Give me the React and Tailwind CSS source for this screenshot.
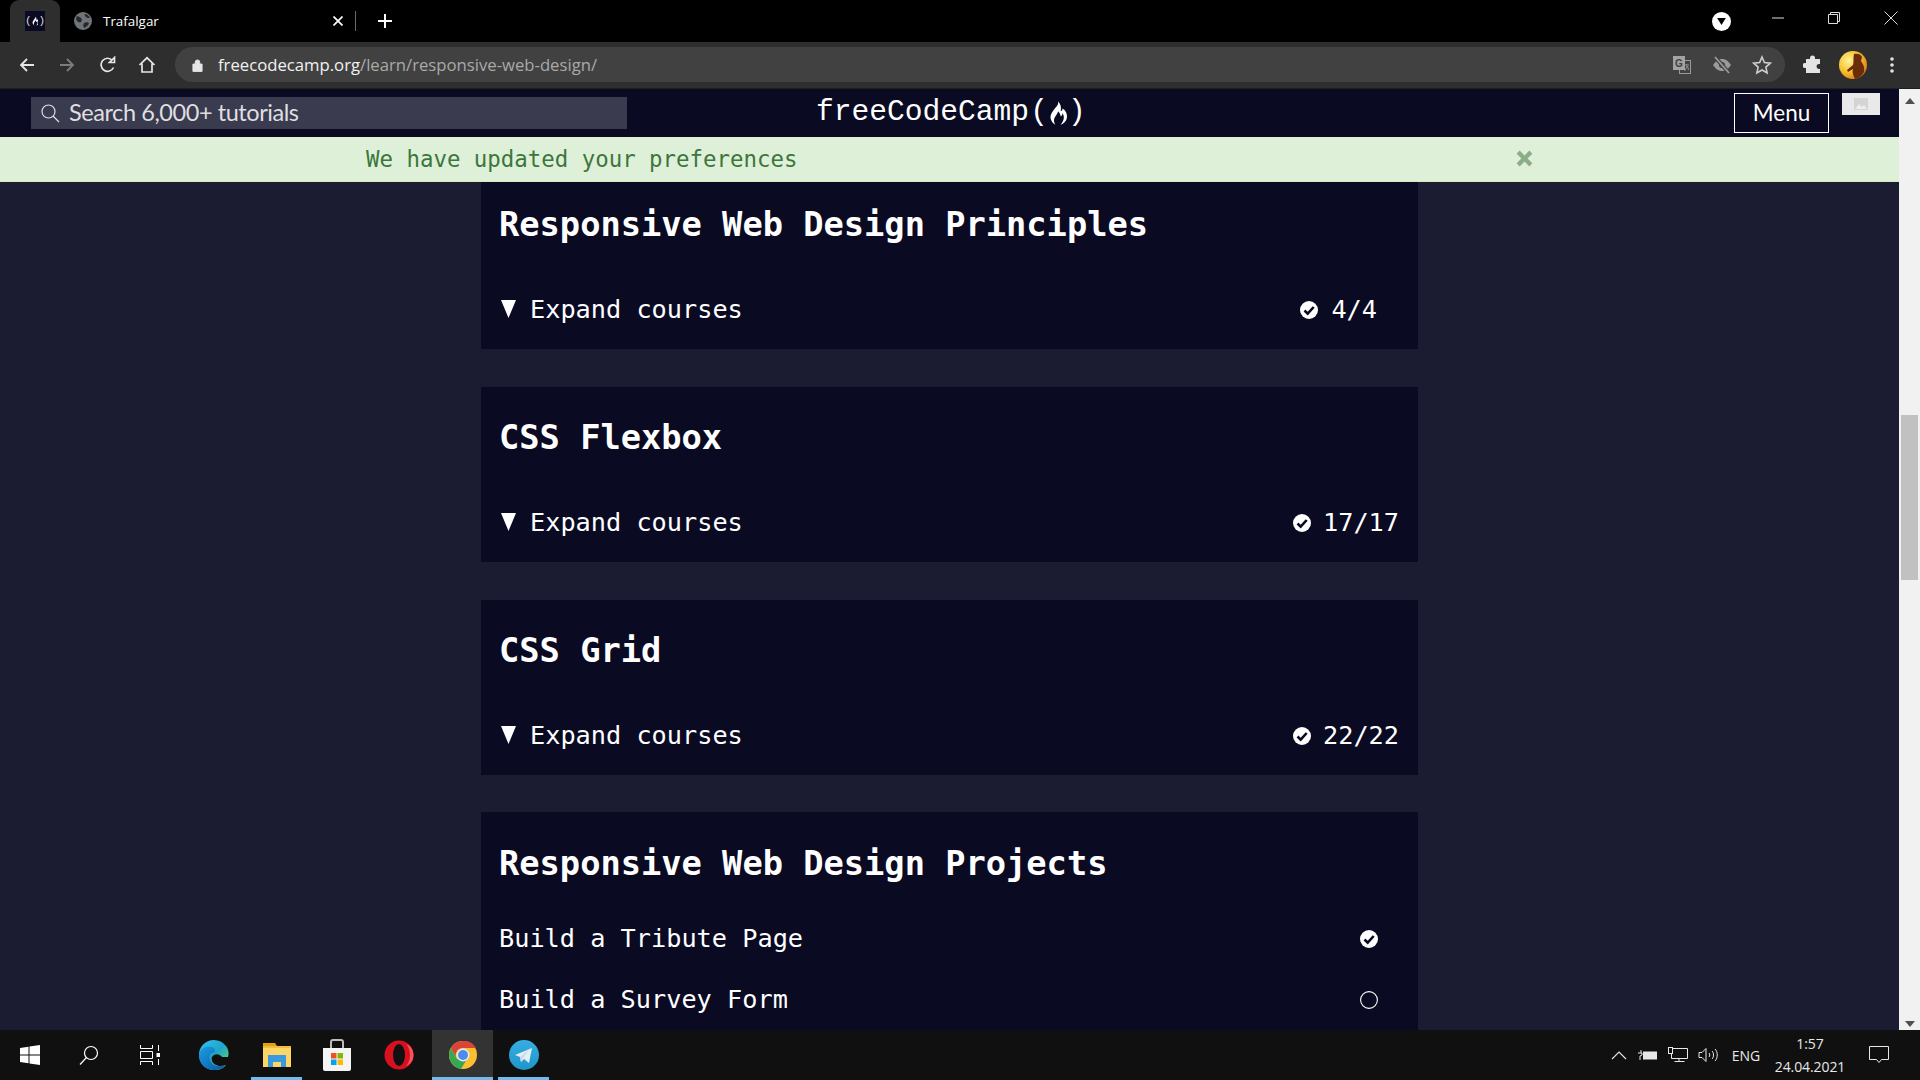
import React from "react";

const mono = "font-['DejaVu_Sans_Mono','Liberation_Mono',monospace]";

const Flame = ({ className = "", color = "#fff" }) => (
  <svg viewBox="0 0 20 26" className={className}>
    <path fill={color} d="M10 0C11 4 8 6 5 10 2 14 1 17 2 20 3 23 5 25 7 26 5 23 5 20 7 17 8 15 10 13 10 11 12 13 13 15 13 17 14 16 15 15 15 13 17 16 17 20 15 23L13 26C17 25 20 21 20 17 20 12 17 9 15 8 15 10 14 11 13 11 14 7 13 3 10 0z" />
  </svg>
);

const Check = ({ size = 18 }) => (
  <svg viewBox="0 0 18 18" width={size} height={size} className="shrink-0">
    <circle cx="9" cy="9" r="9" fill="#fff" />
    <path d="M4.500 9.500 7.700 12.700 13.700 6" fill="none" stroke="#0a0a23" strokeWidth="2.600" />
  </svg>
);

const Circle = () => (
  <svg viewBox="0 0 18 18" width="18" height="18" className="shrink-0">
    <circle cx="9" cy="9" r="8.400" fill="none" stroke="#fff" strokeWidth="1.100" />
  </svg>
);

const Triangle = () => (
  <svg viewBox="0 0 15 18" width="15" height="18" className="shrink-0 -mt-[3px] ml-[2px]">
    <path d="M0 0h15L7.500 18z" fill="#fff" />
  </svg>
);

function Tabs() {
  return (
    <div className="h-[42px] bg-black flex items-center shrink-0 text-white">
      <div className="ml-[10px] w-[50px] h-[42px] mt-0 bg-[#2e2e2e] rounded-t-[9px] flex items-center justify-center">
        <div className="w-[20px] h-[20px] bg-[#0a0a23] flex items-center justify-center text-[#ddd] text-[11px] font-['Liberation_Mono',monospace] leading-none">
          (<Flame className="w-[7px] h-[10px]" />)
        </div>
      </div>
      <svg viewBox="0 0 18 18" width="18" height="18" className="ml-[14px]">
        <circle cx="9" cy="9" r="9" fill="#6f7478" />
        <path d="M3 4c2 1 3 1 4 2s1 3 0 4-3 0-4-1-1-3 0-5zM11 2c2 0 4 2 5 4-2 0-3 0-4-1s-2-2-1-3zM10 11c2-1 4-1 5 0-1 3-3 4-5 5-1-2-1-3 0-5z" fill="#26282a" />
      </svg>
      <span className="ml-[11px] w-[230px] text-[13.400px] font-['Open_Sans',sans-serif]">Trafalgar</span>
      <svg viewBox="0 0 10 10" width="10" height="10"><path d="M0.500 0.500l9 9M9.500 0.500l-9 9" stroke="#fff" strokeWidth="1.700" /></svg>
      <div className="ml-[12px] w-px h-[20px] bg-[#6a6a6a]" />
      <svg viewBox="0 0 16 16" width="16" height="16" className="ml-[21px]"><path d="M8 1v14M1 8h14" stroke="#fff" strokeWidth="2" /></svg>
      <div className="flex-1" />
      <div className="w-[19px] h-[19px] rounded-full bg-white flex items-center justify-center mr-[40px]">
        <svg viewBox="0 0 10 8" width="9" height="7"><path d="M0 0h10L5 8z" fill="#000" /></svg>
      </div>
      <svg viewBox="0 0 14 14" width="14" height="14" className="mr-[42px] -mt-[6px]"><path d="M1 7h12" stroke="#ddd" strokeWidth="1" /></svg>
      <svg viewBox="0 0 14 14" width="14" height="14" className="mr-[43px] -mt-[6px]"><path d="M1.500 3.500h9v9h-9zM3.500 3.500v-2h9v9h-2" fill="none" stroke="#ddd" strokeWidth="1" /></svg>
      <svg viewBox="0 0 14 14" width="14" height="14" className="mr-[22px] -mt-[6px]"><path d="M0.500 0.500l13 13M13.500 0.500l-13 13" stroke="#ddd" strokeWidth="1" /></svg>
    </div>
  );
}

function Toolbar() {
  return (
    <div className="h-[47px] bg-[#2e2e2e] flex items-center shrink-0 border-b border-[#1f1f1f] pb-[1px] text-white">
      <svg viewBox="0 0 18 18" width="18" height="18" className="ml-[18px]"><path d="M16 9H3M9 3 3 9l6 6" fill="none" stroke="#e6e6e6" strokeWidth="1.800" /></svg>
      <svg viewBox="0 0 18 18" width="18" height="18" className="ml-[22px]"><path d="M2 9h13M9 3l6 6-6 6" fill="none" stroke="#7c7c7c" strokeWidth="1.800" /></svg>
      <svg viewBox="0 0 18 18" width="18" height="18" className="ml-[23px]"><path d="M14.500 11.500A6.500 6.500 0 1 1 13.500 4.500M15.500 1.500v5h-5z" fill="none" stroke="#e6e6e6" strokeWidth="1.700" /></svg>
      <svg viewBox="0 0 18 18" width="18" height="18" className="ml-[21px]"><path d="M1.500 9 9 1.800 16.500 9M4 7.500v8.500h10V7.500" fill="none" stroke="#e6e6e6" strokeWidth="1.700" /></svg>
      <div className="ml-[19px] w-[1610px] h-[35px] rounded-full bg-[#414141] flex items-center">
        <svg viewBox="0 0 12 14" width="11" height="14" className="ml-[17px]"><path d="M1 6h10v8H1zM3.500 6V4a2.500 2.500 0 0 1 5 0v2" fill="#e6e6e6" stroke="#e6e6e6" strokeWidth="1" /></svg>
        <span className="ml-[15px] text-[16.700px] font-['Open_Sans',sans-serif] whitespace-nowrap text-[#f1f1f1]">freecodecamp.org<span className="text-[#a9a9a9]">/learn/responsive-web-design/</span></span>
        <div className="flex-1" />
        <svg viewBox="0 0 18 18" width="18" height="18">
          <rect x="6.500" y="4.500" width="11" height="13" fill="#414141" stroke="#9a9a9a" />
          <rect x="0" y="0" width="12" height="14" fill="#a3a3a3" />
          <text x="2" y="11" fontSize="10" fontWeight="700" fill="#414141" fontFamily="Liberation Sans, sans-serif">G</text>
          <path d="M11 9h5M13.500 8v1.500M11.500 15l3-5 1 4" fill="none" stroke="#9a9a9a" strokeWidth="0.900" />
        </svg>
        <svg viewBox="0 0 20 18" width="20" height="18" className="ml-[21px]"><path d="M1 9c3-4.500 6-6 9-6s6 1.500 9 6c-3 4.500-6 6-9 6s-6-1.500-9-6z" fill="#9a9a9a" /><circle cx="10" cy="9" r="3" fill="#414141" /><path d="M3 1l14 16" stroke="#414141" strokeWidth="4" /><path d="M3 1l14 16" stroke="#9a9a9a" strokeWidth="1.800" /></svg>
        <svg viewBox="0 0 20 20" width="20" height="20" className="ml-[20px] mr-[13px]"><path d="M10 2l2.400 5.500 5.900.6-4.400 4 1.200 5.900L10 15l-5.100 3 1.200-5.900-4.400-4 5.900-.6z" fill="none" stroke="#cfcfcf" strokeWidth="1.600" /></svg>
      </div>
      <svg viewBox="0 0 20 20" width="20" height="20" className="ml-[18px]"><path d="M7 3a2.500 2.500 0 0 1 5 0v1h5v5h-1a2.500 2.500 0 0 0 0 5h1v4H3v-5H2a2.500 2.500 0 0 1 0-5h1V4h4z" fill="#e4e4e4" /></svg>
      <svg viewBox="0 0 28 28" width="28" height="28" className="ml-[16px]">
        <defs><radialGradient id="av" cx="0.350" cy="0.350" r="0.800"><stop offset="0" stopColor="#fff29a" /><stop offset="0.500" stopColor="#f6c22e" /><stop offset="1" stopColor="#d9690e" /></radialGradient></defs>
        <circle cx="14" cy="14" r="14" fill="url(#av)" />
        <path d="M15 3c3-1 7 0 8 3l-1 4c2 3 4 6 3 11-2 4-6 7-9 7-2-4-3-7-2-10l-5 3-1-2 6-5c1-3 0-7 1-11z" fill="#6b2c08" />
      </svg>
      <svg viewBox="0 0 4 16" width="4" height="16" className="ml-[23px]"><circle cx="2" cy="2" r="1.800" fill="#e4e4e4" /><circle cx="2" cy="8" r="1.800" fill="#e4e4e4" /><circle cx="2" cy="14" r="1.800" fill="#e4e4e4" /></svg>
    </div>
  );
}

function Header() {
  return (
    <div className="h-[48px] bg-[#0a0a23] flex items-start shrink-0 text-white">
      <div className="ml-[31px] mt-[8px] w-[596px] h-[32px] bg-[#3b3b4f] flex items-center text-[#dfdfe2] font-['Lato',sans-serif]">
        <svg viewBox="0 0 20 20" width="20" height="20" className="ml-[9px]"><circle cx="8.500" cy="8.500" r="6.500" fill="none" stroke="#dfdfe2" strokeWidth="1.200" /><path d="M13 13l6 6" stroke="#dfdfe2" strokeWidth="1.200" /></svg>
        <span className="ml-[9px] text-[23.500px] leading-none tracking-[-0.43px] whitespace-nowrap">Search 6,000+ tutorials</span>
      </div>
      <div className="ml-[189px] mt-[6px] h-[36px] flex items-center text-[29.600px] leading-none whitespace-nowrap font-['Liberation_Mono',monospace]">
        freeCodeCamp<span className="ml-[1px]">(</span><Flame className="w-[18px] h-[24px] mx-[1px]" /><span>)</span>
      </div>
      <div className="flex-1" />
      <div className="mt-[4px] w-[95px] h-[40px] border border-white flex items-center justify-center text-[22.500px] font-['Lato',sans-serif] leading-none">Menu</div>
      <div className="ml-[13px] mt-[4px] w-[38px] h-[22px] bg-[#e9e9e9] flex items-center justify-center mr-[19px]">
        <svg viewBox="0 0 14 12" width="14" height="12"><rect width="14" height="12" fill="#d4d4d4" /><path d="M1 11l4-5 3 3 2-2 3 4z" fill="#eee" /></svg>
      </div>
    </div>
  );
}

function Banner() {
  return (
    <div className="h-[45px] bg-[#dff0d8] border-b border-[#d6e9c6] flex items-center shrink-0 pl-[366px]">
      <span className={`text-[22.400px] leading-none text-[#3c763d] whitespace-nowrap ${mono}`}>We have updated your preferences</span>
      <svg viewBox="0 0 16 16" width="17" height="17" className="ml-[719px] -mt-[1px]"><path d="M2 2l12 12M14 2 2 14" stroke="#8cae87" strokeWidth="4" /></svg>
    </div>
  );
}

function Card({ title, done, total, narrow }) {
  return (
    <div className={`w-[937px] h-[175px] shrink-0 bg-[#0a0a23] text-white pl-[18px] pr-[19px] pt-[31px] ${mono}`}>
      <h2 className="text-[33.700px] leading-[40px] font-bold whitespace-nowrap">{title}</h2>
      <div className="mt-[50px] h-[30px] flex items-center text-[25.250px] leading-none">
        <Triangle />
        <span className="ml-[14px]">Expand courses</span>
        <div className="flex-1" />
        <Check />
        <span className={narrow ? "ml-[13px] mr-[22px]" : "ml-[12px]"}>{done}/{total}</span>
      </div>
    </div>
  );
}

function Main() {
  return (
    <div className="flex-1 overflow-hidden bg-[#1b1b32] pl-[481px] flex flex-col gap-[38px]">
      <div className="-mt-[8px]">
        <Card title="Responsive Web Design Principles" done={4} total={4} narrow />
      </div>
      <Card title="CSS Flexbox" done={17} total={17} />
      <Card title="CSS Grid" done={22} total={22} />
      <div className={`-mt-[1px] w-[937px] h-[300px] shrink-0 bg-[#0a0a23] text-white pl-[18px] pr-[40px] pt-[32px] ${mono}`}>
        <h2 className="text-[33.700px] leading-[40px] font-bold whitespace-nowrap">Responsive Web Design Projects</h2>
        <div className="mt-[40px] h-[30px] flex items-center justify-between text-[25.250px] leading-none">
          <span>Build a Tribute Page</span><Check />
        </div>
        <div className="mt-[31px] h-[30px] flex items-center justify-between text-[25.250px] leading-none">
          <span>Build a Survey Form</span><Circle />
        </div>
      </div>
    </div>
  );
}

function Scrollbar() {
  return (
    <div className="w-[21px] bg-[#f1f1f1] shrink-0 flex flex-col items-center">
      <svg viewBox="0 0 10 6" width="10" height="6" className="mt-[9px]"><path d="M5 0l5 6H0z" fill="#505050" /></svg>
      <div className="mt-[311px] w-[17px] h-[165px] bg-[#c1c1c1]" />
      <div className="flex-1" />
      <svg viewBox="0 0 10 6" width="10" height="6" className="mb-[3px]"><path d="M0 0h10L5 6z" fill="#505050" /></svg>
    </div>
  );
}

const Edge = () => (
  <svg viewBox="0 0 32 32" width="32" height="32">
    <defs>
      <linearGradient id="e1" x1="0" y1="0" x2="1" y2="1"><stop offset="0" stopColor="#35c1f1" /><stop offset="0.500" stopColor="#1ea5c9" /><stop offset="1" stopColor="#7be05b" /></linearGradient>
      <linearGradient id="e2" x1="0" y1="0" x2="1" y2="1"><stop offset="0" stopColor="#1b9de2" /><stop offset="1" stopColor="#0c59a4" /></linearGradient>
    </defs>
    <path d="M16 1C7 1 1 8 1 16c0 9 7 15 15 15 5 0 9-1 12-5-5 2-12 1-14-4-1-3 0-5 2-6 3-2 7 0 8 2h6c1-3 1-7-2-11C25 3 21 1 16 1z" fill="url(#e1)" />
    <path d="M1 16C2 9 9 6 14 8c3 1 3 3 3 5-5 1-7 5-4 10 2 4 8 5 15 3-3 4-7 5-12 5C7 31 1 24 1 16z" fill="url(#e2)" />
  </svg>
);

const Files = () => (
  <svg viewBox="0 0 30 28" width="30" height="28">
    <path d="M1 2h12l2 3H1z" fill="#e0a30a" />
    <path d="M1 5h28v21H1z" fill="#fcd667" />
    <path d="M1 5h28v2H1z" fill="#f0bd3c" />
    <path d="M6 14h18v12h-5v-5h-8v5H6z" fill="#3a9ae0" />
    <path d="M11 21h8v1h-8z" fill="#fcd667" />
  </svg>
);

const Store = () => (
  <svg viewBox="0 0 30 32" width="30" height="32">
    <path d="M9 9V3a2 2 0 0 1 2-2h8a2 2 0 0 1 2 2v6" fill="none" stroke="#bdbdbd" strokeWidth="2" />
    <path d="M1 9h28v21a2 2 0 0 1-2 2H3a2 2 0 0 1-2-2z" fill="#f4f4f4" />
    <rect x="9" y="14" width="5.500" height="5.500" fill="#f25022" /><rect x="15.500" y="14" width="5.500" height="5.500" fill="#7fba00" />
    <rect x="9" y="20.500" width="5.500" height="5.500" fill="#00a4ef" /><rect x="15.500" y="20.500" width="5.500" height="5.500" fill="#ffb900" />
  </svg>
);

const Opera = () => (
  <svg viewBox="0 0 30 30" width="30" height="30">
    <circle cx="15" cy="15" r="14.500" fill="#d6101f" />
    <ellipse cx="15" cy="15" rx="6" ry="11" fill="#101010" />
    <path d="M22 4c5 2 7.500 6 7.500 11s-2.500 9-7.500 11c2-2 4-6 4-11s-2-9-4-11z" fill="#f5525c" />
  </svg>
);

const Chrome = () => (
  <svg viewBox="0 0 28 28" width="28" height="28">
    <circle cx="14" cy="14" r="14" fill="#fbc02d" />
    <path d="M14 0a14 14 0 0 0-12 7l6 11a7 7 0 0 1 6-11h13A14 14 0 0 0 14 0z" fill="#db4437" />
    <path d="M2 7a14 14 0 0 0 10 20.900L18 18 8 18z" fill="#34a853" />
    <circle cx="14" cy="14" r="6.500" fill="#e8eaed" />
    <circle cx="14" cy="14" r="5" fill="#4d8bf0" />
  </svg>
);

const Telegram = () => (
  <svg viewBox="0 0 30 30" width="30" height="30">
    <defs><linearGradient id="tg" x1="0.500" y1="0" x2="0.500" y2="1"><stop offset="0" stopColor="#37aee2" /><stop offset="1" stopColor="#1e96c8" /></linearGradient></defs>
    <circle cx="15" cy="15" r="15" fill="url(#tg)" />
    <path d="M6 15 23 8l-3 15-5-4-3 3-1-5z" fill="#e3eef6" />
    <path d="M11 17l9-7-6 8-2 4z" fill="#c8daea" />
  </svg>
);

function Slot({ w, ml = 0, active, under, children }) {
  return (
    <div className={`h-[50px] relative flex items-center justify-center shrink-0 ${active ? "bg-[#333333]" : ""}`} style={{ width: w, marginLeft: ml }}>
      {children}
      {under && <div className="absolute left-0 right-0 bottom-0 h-[3px] bg-[#76b9ed]" />}
    </div>
  );
}

function Taskbar() {
  return (
    <div className="h-[50px] bg-[#101010] flex items-center shrink-0 text-[#e8e8e8] font-['Open_Sans',sans-serif]">
      <Slot w={60}>
        <svg viewBox="0 0 20 20" width="20" height="20"><path d="M0 3l8.500-1.200V9.500H0zM9.500 1.600 20 0v9.500H9.500zM0 10.500h8.500v7.700L0 17zM9.500 10.500H20V20L9.500 18.400z" fill="#fff" /></svg>
      </Slot>
      <Slot w={58}>
        <svg viewBox="0 0 20 20" width="20" height="20"><circle cx="12" cy="8" r="6.500" fill="none" stroke="#fff" strokeWidth="1.200" /><path d="M7.500 12.500 1 19.500" stroke="#fff" strokeWidth="1.200" /></svg>
      </Slot>
      <Slot w={64}>
        <svg viewBox="0 0 20 20" width="20" height="20" fill="none" stroke="#fff" strokeWidth="1"><path d="M0.500 3.500V0M12.500 3.500V0M0.500 3.500h12M0.500 6.500h12v7h-12zM0.500 16.500h12M0.500 16.500V20M12.500 16.500V20M18.500 0v6M18.500 14v6" /><rect x="16.500" y="8" width="4" height="4" fill="#fff" stroke="none" /></svg>
      </Slot>
      <Slot w={64}><Edge /></Slot>
      <Slot w={51} ml={5} under><Files /></Slot>
      <Slot w={62} ml={4}><Store /></Slot>
      <Slot w={62}><Opera /></Slot>
      <Slot w={61} ml={2} active under><Chrome /></Slot>
      <Slot w={51} ml={5} under><Telegram /></Slot>
      <div className="flex-1" />
      <svg viewBox="0 0 16 10" width="16" height="10" className="mr-[11px]"><path d="M1 9l7-7 7 7" fill="none" stroke="#e8e8e8" strokeWidth="1.100" /></svg>
      <svg viewBox="0 0 20 12" width="20" height="12" className="mr-[10px]"><path d="M3 1v3M0 4h4v2l-2 1v4" fill="none" stroke="#e8e8e8" /><rect x="5" y="2.500" width="14" height="8" fill="#e8e8e8" /></svg>
      <svg viewBox="0 0 20 16" width="20" height="16" className="mr-[10px]"><path d="M3.500 1.500h16v10h-16zM11 11.500v3M6.500 14.500h10" fill="none" stroke="#e8e8e8" /><rect x="0.500" y="0.500" width="4" height="6" fill="#101010" stroke="#e8e8e8" /></svg>
      <svg viewBox="0 0 20 16" width="20" height="16" className="mr-[13px]"><path d="M1 5.500h3L8 1.500v13L4 10.500H1zM11 6c1 1 1 3 0 4M14 4c2 2 2 6 0 8M17 2c3 3 3 9 0 12" fill="none" stroke="#e8e8e8" /></svg>
      <span className="text-[14px] w-[30px] text-center mr-[13px]">ENG</span>
      <div className="w-[72px] flex flex-col items-center text-[14px] leading-[23px] mr-[23px] tracking-[-0.1px]">
        <span>1:57</span>
        <span>24.04.2021</span>
      </div>
      <svg viewBox="0 0 20 18" width="20" height="18" className="mr-[31px]"><path d="M0.500 0.500h19v13h-7l-2.500 3-2.500-3h-7z" fill="none" stroke="#e8e8e8" /></svg>
    </div>
  );
}

export default function App() {
  return (
    <div className="w-[1920px] h-[1080px] flex flex-col overflow-hidden bg-black">
      <Tabs />
      <Toolbar />
      <div className="flex-1 min-h-0 flex">
        <div className="flex-1 min-w-0 flex flex-col">
          <Header />
          <Banner />
          <Main />
        </div>
        <Scrollbar />
      </div>
      <Taskbar />
    </div>
  );
}
